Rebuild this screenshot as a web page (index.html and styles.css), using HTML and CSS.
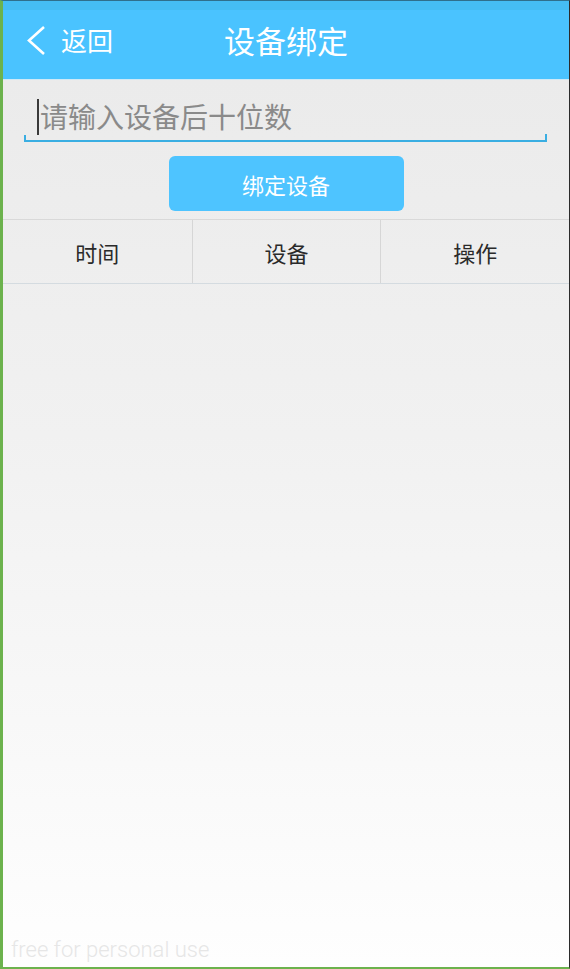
FILE: index.html
```html
<!DOCTYPE html>
<html lang="zh-CN">
<head>
<meta charset="utf-8">
<title>设备绑定</title>
<link rel="stylesheet" href="styles.css">
</head>
<body>
<div class="frame">
  <header class="topbar">
    <a class="back" href="#">
      <svg class="chevron" width="20" height="32" viewBox="0 0 20 32" aria-hidden="true">
        <path d="M18 2 L3 15.5 L18 29" fill="none" stroke="#ffffff" stroke-width="2.6" stroke-linecap="butt" stroke-linejoin="miter"/>
      </svg>
      <span class="back-text">返回</span>
    </a>
    <h1 class="title">设备绑定</h1>
    <div class="spacer"></div>
  </header>
  <main class="content">
    <div class="field">
      <span class="caret"></span>
      <span class="placeholder">请输入设备后十位数</span>
    </div>
    <div class="actions">
      <button class="bind-btn" type="button">绑定设备</button>
    </div>
    <div class="table-head">
      <div class="cell">时间</div>
      <div class="cell">设备</div>
      <div class="cell">操作</div>
    </div>
    <div class="watermark">free for personal use</div>
  </main>
</div>
</body>
</html>
```

FILE: styles.css
```css
html, body {
  margin: 0;
  padding: 0;
}
body {
  width: 570px;
  height: 969px;
  overflow: hidden;
  font-family: "Noto Sans CJK SC", "Noto Sans", sans-serif;
}
.frame {
  box-sizing: border-box;
  width: 570px;
  height: 969px;
  display: flex;
  flex-direction: column;
  border-left: 3px solid #6cb24d;
  border-bottom: 2px solid #6cb24d;
  border-right: 1px solid #2b2b2b;
  border-top: 1px solid #2f6f8c;
}
.topbar {
  height: 78px;
  flex: none;
  display: grid;
  grid-template-columns: 1fr auto 1fr;
  align-items: center;
  background: linear-gradient(#45bdf4 0, #45bdf4 9px, #4ac3ff 9px, #4ac3ff 100%);
  border-bottom: 1px solid #cfe9f6;
}
.back {
  display: flex;
  align-items: center;
  padding-left: 23px;
  color: #ffffff;
  text-decoration: none;
}
.chevron {
  display: block;
  margin-top: 1px;
}
.back-text {
  margin-left: 15px;
  font-size: 26px;
  line-height: 30px;
}
.title {
  margin: 0;
  font-size: 31px;
  font-weight: 400;
  color: #ffffff;
  line-height: 36px;
}
.content {
  flex: 1;
  position: relative;
  display: flex;
  flex-direction: column;
  background: linear-gradient(#ebebeb 0%, #f1f1f1 40%, #fefefe 100%);
}
.field {
  position: relative;
  margin: 12px 22px 0 21px;
  height: 48px;
  display: flex;
  align-items: center;
  padding-left: 13px;
  border-bottom: 2px solid #3aaee2;
}
.field::before,
.field::after {
  content: "";
  position: absolute;
  bottom: 0;
  width: 2px;
  height: 5px;
  background: #3aaee2;
}
.field::before { left: 0; }
.field::after { right: 0; height: 6px; }
.caret {
  width: 2px;
  height: 36px;
  background: #3a3a3a;
  margin-top: 2px;
}
.placeholder {
  font-size: 28px;
  color: #8a8a8a;
  line-height: 40px;
  margin-left: 1px;
}
.actions {
  display: flex;
  justify-content: center;
  margin-top: 14px;
}
.bind-btn {
  width: 235px;
  height: 55px;
  border: none;
  border-radius: 6px;
  background: #4ec4ff;
  color: #ffffff;
  font-family: "Noto Sans CJK SC", "Noto Sans", sans-serif;
  font-size: 22px;
  padding: 0;
}
.table-head {
  margin-top: 8px;
  display: grid;
  grid-template-columns: 1fr 1fr 1fr;
  border-top: 1px solid #d9d9d9;
  border-bottom: 1px solid #d4dbe0;
  height: 63px;
}
.cell {
  display: flex;
  align-items: center;
  justify-content: center;
  font-size: 22px;
  font-weight: 400;
  color: #2a2a2a;
}
.cell + .cell {
  border-left: 1px solid #d6d6d6;
}
.watermark {
  position: absolute;
  left: 8px;
  bottom: 5px;
  font-family: Roboto, "Noto Sans", sans-serif;
  font-weight: 300;
  font-size: 22px;
  color: #e6e6e6;
}
```
